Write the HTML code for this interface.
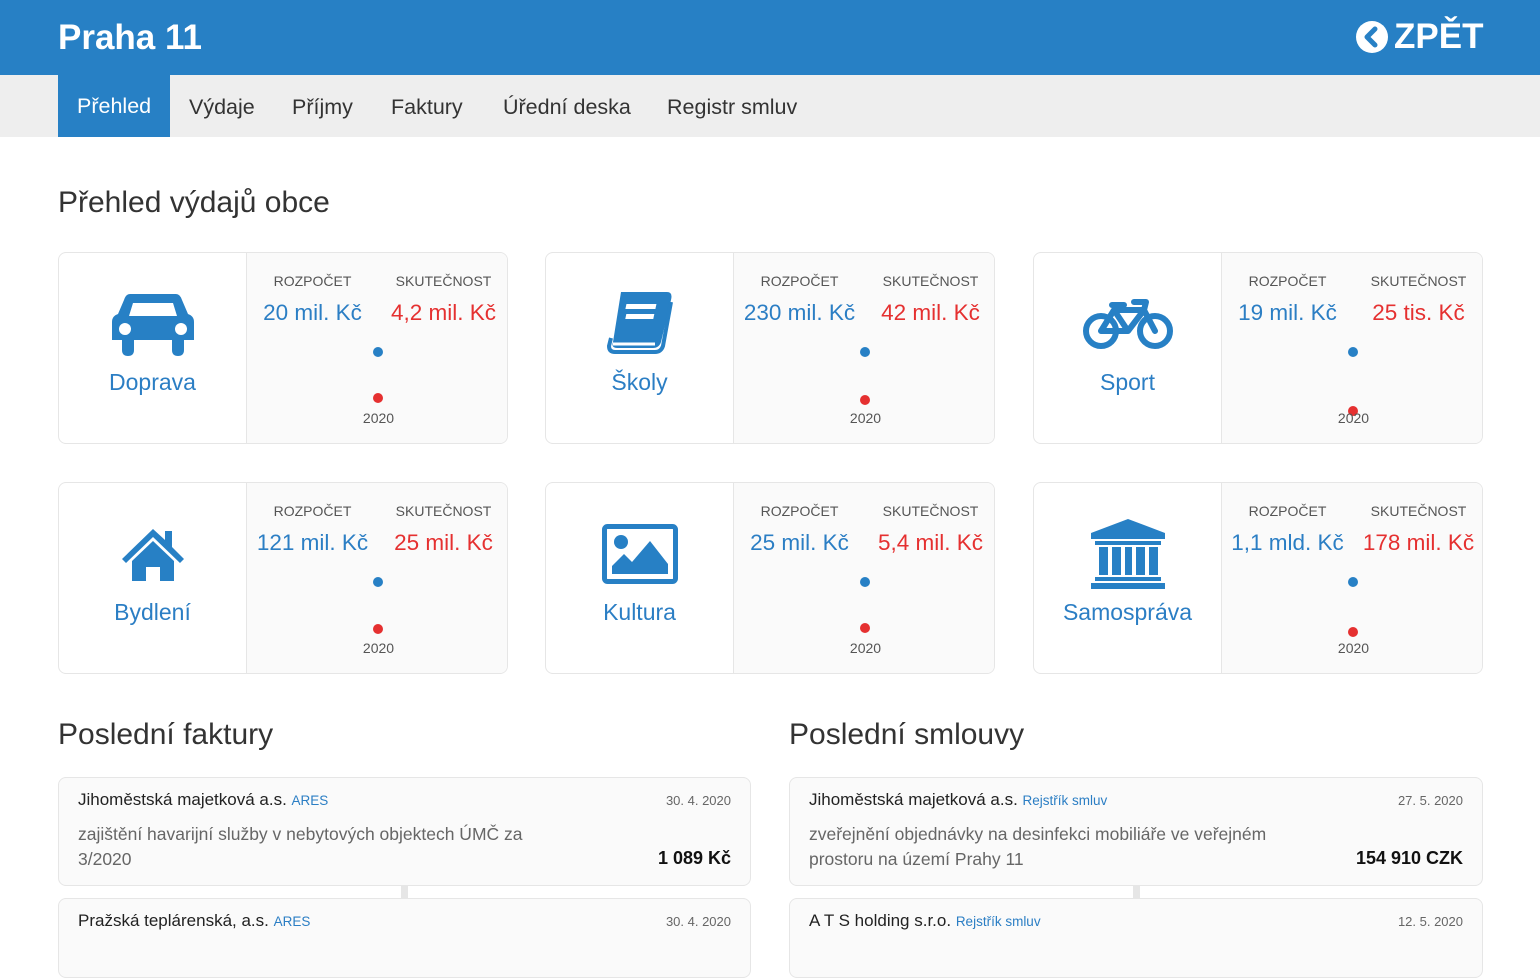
<!DOCTYPE html>
<html><head><meta charset="utf-8"><style>
*{margin:0;padding:0;box-sizing:border-box}
body{width:1540px;height:948px;overflow:hidden;background:#fff;font-family:"Liberation Sans",sans-serif;color:#333;position:relative}
.hdr{position:absolute;left:0;top:0;width:1540px;height:75px;background:#2780c5}
.hdr h1{position:absolute;left:58px;top:18px;color:#fff;font-size:35px;font-weight:bold}
.back{position:absolute;left:1356px;top:17px;color:#fff;font-size:35px;font-weight:bold;display:flex;align-items:center;gap:6px}
.nav{position:absolute;left:0;top:75px;width:1540px;height:62px;background:#eeeeee}
.nav span{position:absolute;top:1px;height:61px;line-height:62px;font-size:21.5px;color:#333}
.nav .act{background:#2780c5;color:#fff;padding:0 19px;top:0;height:62px}
h2{position:absolute;font-size:30px;font-weight:normal;color:#333}
.card{position:absolute;width:450px;height:192px;border:1px solid #e6e6e6;border-radius:8px;overflow:hidden;background:#fff}
.card .ic{position:absolute;left:0;top:0;width:187px;height:192px;text-align:center}
.card .ic svg{position:absolute;left:50%;transform:translate(-50%,-50%)}
.card .ic .nm{position:absolute;left:0;width:187px;top:116px;font-size:23px;color:#2b7ec4}
.card .rt{position:absolute;left:187px;top:0;width:263px;height:192px;background:#fafafa;border-left:1px solid #e6e6e6}
.lab{position:absolute;top:20px;width:131px;text-align:center;font-size:14px;color:#555}
.val{position:absolute;top:47px;width:131px;text-align:center;font-size:22.5px;white-space:nowrap}
.b{color:#2b7ec4}.r{color:#e53030}
.dot{position:absolute;width:10px;height:10px;border-radius:5px;left:126px}
.yr{position:absolute;top:157px;width:263px;text-align:center;font-size:14px;color:#555}
.inv{position:absolute;background:#fafafa;border:1px solid #e6e6e6;border-radius:8px}
.inv .t{position:absolute;left:19px;top:12px;font-size:17px;color:#222}
.inv .t small{font-size:13.5px;color:#2b7ec4}
.inv .d{position:absolute;right:19px;top:15px;font-size:13px;color:#666}
.inv .s{position:absolute;left:19px;top:44px;font-size:17.5px;color:#666;line-height:25px}
.inv .p{position:absolute;right:19px;top:70px;font-size:18px;font-weight:bold;color:#111}
.conn{position:absolute;width:7px;height:12px;background:#e6e6e6}
</style></head><body>
<div class="hdr"><h1>Praha 11</h1>
<div class="back"><svg width="32" height="32" viewBox="0 0 32 32"><circle cx="16" cy="16" r="16" fill="#fff"/><path d="M19 8 L11 16 L19 24" stroke="#2780c5" stroke-width="5" fill="none" stroke-linecap="round" stroke-linejoin="round"/></svg>ZPĚT</div></div>
<div class="nav">
<span class="act" style="left:58px">Přehled</span>
<span style="left:189px">Výdaje</span>
<span style="left:292px">Příjmy</span>
<span style="left:391px">Faktury</span>
<span style="left:503px">Úřední deska</span>
<span style="left:667px">Registr smluv</span>
</div>
<h2 style="left:58px;top:186px">Přehled výdajů obce</h2>

<div class="card" style="left:58px;top:252px">
 <div class="ic"><svg style="top:71px" width="82" height="64" viewBox="0 0 82 64"><path d="M18 2 H64 Q68 2 70 8 L76 22 Q82 24 82 30 V48 H72 V58 Q72 64 66 64 Q60 64 60 58 V48 H22 V58 Q22 64 16 64 Q10 64 10 58 V48 H0 V30 Q0 24 6 22 L12 8 Q14 2 18 2Z M21 11 L17 24 H65 L61 11Z" fill="#2780c5" fill-rule="evenodd"/><circle cx="13" cy="37" r="6" fill="#fff"/><circle cx="69" cy="37" r="6" fill="#fff"/></svg><div class="nm">Doprava</div></div>
 <div class="rt"><div class="lab" style="left:0">ROZPOČET</div><div class="lab" style="left:131px">SKUTEČNOST</div>
 <div class="val b" style="left:0">20 mil. Kč</div><div class="val r" style="left:131px">4,2 mil. Kč</div>
 <div class="dot" style="background:#2780c5;top:94px"></div><div class="dot" style="background:#e53030;top:140px"></div><div class="yr">2020</div></div>
</div>
<div class="card" style="left:545px;top:252px">
 <div class="ic"><svg style="top:70px" width="66" height="62" viewBox="0 0 66 62"><path d="M14 0 H60 Q66 0 64 8 L54 50 Q52 56 46 56 H10 Q4 56 6 50 Z" fill="#2780c5"/><path d="M64 10 L56 54 Q54 60 48 60 H8 Q2 60 2 54 L4 46" stroke="#2780c5" stroke-width="4" fill="none"/><rect x="22" y="12" width="30" height="5" fill="#fff" transform="skewX(-12)"/><rect x="24" y="22" width="28" height="5" fill="#fff" transform="skewX(-12)"/><path d="M6 52 H48" stroke="#fff" stroke-width="3"/></svg><div class="nm">Školy</div></div>
 <div class="rt"><div class="lab" style="left:0">ROZPOČET</div><div class="lab" style="left:131px">SKUTEČNOST</div>
 <div class="val b" style="left:0">230 mil. Kč</div><div class="val r" style="left:131px">42 mil. Kč</div>
 <div class="dot" style="background:#2780c5;top:94px"></div><div class="dot" style="background:#e53030;top:142px"></div><div class="yr">2020</div></div>
</div>
<div class="card" style="left:1033px;top:252px">
 <div class="ic"><svg style="top:71px" width="92" height="52" viewBox="0 0 92 52"><g stroke="#2780c5" stroke-width="6" fill="none" stroke-linecap="round" stroke-linejoin="round"><circle cx="19" cy="33" r="15"/><circle cx="73" cy="33" r="15"/><path d="M19 33 L32 12 H62 L73 33 M32 12 L46 33 H19 M46 33 L62 12 M52 4 H64 L62 12 M30 7 H42"/></g></svg><div class="nm">Sport</div></div>
 <div class="rt"><div class="lab" style="left:0">ROZPOČET</div><div class="lab" style="left:131px">SKUTEČNOST</div>
 <div class="val b" style="left:0">19 mil. Kč</div><div class="val r" style="left:131px">25 tis. Kč</div>
 <div class="dot" style="background:#2780c5;top:94px"></div><div class="dot" style="background:#e53030;top:153px"></div><div class="yr">2020</div></div>
</div>

<div class="card" style="left:58px;top:482px">
 <div class="ic"><svg style="top:71px" width="66" height="54" viewBox="0 0 66 54"><path d="M33 2 L2 32 L6 36 L33 10 L60 36 L64 32 L52 20 V4 H45 V13Z" fill="#2780c5"/><path d="M12 34 L33 14 L54 34 V54 H40 V40 H26 V54 H12Z" fill="#2780c5"/></svg><div class="nm">Bydlení</div></div>
 <div class="rt"><div class="lab" style="left:0">ROZPOČET</div><div class="lab" style="left:131px">SKUTEČNOST</div>
 <div class="val b" style="left:0">121 mil. Kč</div><div class="val r" style="left:131px">25 mil. Kč</div>
 <div class="dot" style="background:#2780c5;top:94px"></div><div class="dot" style="background:#e53030;top:141px"></div><div class="yr">2020</div></div>
</div>
<div class="card" style="left:545px;top:482px">
 <div class="ic"><svg style="top:71px" width="76" height="60" viewBox="0 0 76 60"><rect x="2.5" y="2.5" width="71" height="55" rx="3" fill="none" stroke="#2780c5" stroke-width="5"/><circle cx="19" cy="18" r="7" fill="#2780c5"/><path d="M10 50 L10 42 L22 30 L30 38 L48 17 L66 40 V50Z" fill="#2780c5"/></svg><div class="nm">Kultura</div></div>
 <div class="rt"><div class="lab" style="left:0">ROZPOČET</div><div class="lab" style="left:131px">SKUTEČNOST</div>
 <div class="val b" style="left:0">25 mil. Kč</div><div class="val r" style="left:131px">5,4 mil. Kč</div>
 <div class="dot" style="background:#2780c5;top:94px"></div><div class="dot" style="background:#e53030;top:140px"></div><div class="yr">2020</div></div>
</div>
<div class="card" style="left:1033px;top:482px">
 <div class="ic"><svg style="top:71px" width="78" height="70" viewBox="0 0 78 70"><path d="M39 0 L76 14 V20 H2 V14Z" fill="#2780c5"/><rect x="6" y="22" width="66" height="4" fill="#2780c5"/><rect x="10" y="28" width="9" height="28" fill="#2780c5"/><rect x="23" y="28" width="9" height="28" fill="#2780c5"/><rect x="36" y="28" width="7" height="28" fill="#2780c5"/><rect x="47" y="28" width="9" height="28" fill="#2780c5"/><rect x="60" y="28" width="9" height="28" fill="#2780c5"/><rect x="6" y="58" width="66" height="4" fill="#2780c5"/><rect x="2" y="64" width="74" height="6" fill="#2780c5"/></svg><div class="nm">Samospráva</div></div>
 <div class="rt"><div class="lab" style="left:0">ROZPOČET</div><div class="lab" style="left:131px">SKUTEČNOST</div>
 <div class="val b" style="left:0">1,1 mld. Kč</div><div class="val r" style="left:131px">178 mil. Kč</div>
 <div class="dot" style="background:#2780c5;top:94px"></div><div class="dot" style="background:#e53030;top:144px"></div><div class="yr">2020</div></div>
</div>

<h2 style="left:58px;top:718px">Poslední faktury</h2>
<h2 style="left:789px;top:718px">Poslední smlouvy</h2>

<div class="inv" style="left:58px;top:777px;width:693px;height:109px">
 <div class="t">Jihoměstská majetková a.s. <small>ARES</small></div><div class="d">30. 4. 2020</div>
 <div class="s">zajištění havarijní služby v nebytových objektech ÚMČ za<br>3/2020</div><div class="p">1 089 Kč</div></div>
<div class="conn" style="left:401px;top:886px"></div>
<div class="inv" style="left:58px;top:898px;width:693px;height:80px">
 <div class="t">Pražská teplárenská, a.s. <small>ARES</small></div><div class="d">30. 4. 2020</div></div>

<div class="inv" style="left:789px;top:777px;width:694px;height:109px">
 <div class="t">Jihoměstská majetková a.s. <small>Rejstřík smluv</small></div><div class="d">27. 5. 2020</div>
 <div class="s">zveřejnění objednávky na desinfekci mobiliáře ve veřejném<br>prostoru na území Prahy 11</div><div class="p">154 910 CZK</div></div>
<div class="conn" style="left:1133px;top:886px"></div>
<div class="inv" style="left:789px;top:898px;width:694px;height:80px">
 <div class="t">A T S holding s.r.o. <small>Rejstřík smluv</small></div><div class="d">12. 5. 2020</div></div>
</body></html>
